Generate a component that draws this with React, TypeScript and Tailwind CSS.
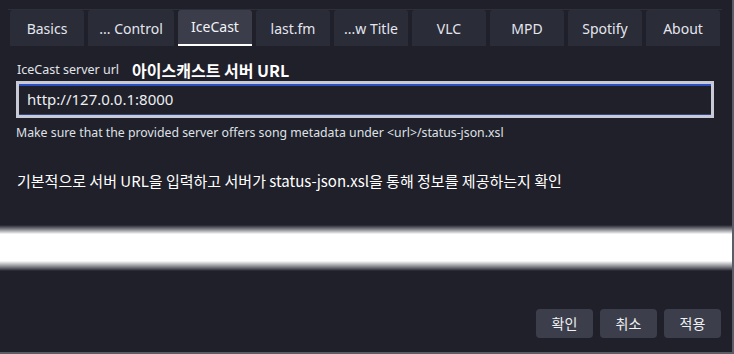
const tabs = [
  { label: "Basics", w: "w-[74px]" },
  { label: "... Control", w: "w-[86px]" },
  { label: "IceCast", w: "w-[74px]", active: true },
  { label: "last.fm", w: "w-[74px]" },
  { label: "...w Title", w: "w-[74px]" },
  { label: "VLC", w: "w-[74px]" },
  { label: "MPD", w: "w-[74px]" },
  { label: "Spotify", w: "w-[74px]" },
  { label: "About", w: "w-[74px]" },
]

const font = "font-['Noto_Sans','Noto_Sans_CJK_KR',sans-serif]"
const kr = "font-['Noto_Sans_CJK_KR','Noto_Sans',sans-serif]"

export default function App() {
  return (
    <div className={`w-[734px] h-[354px] bg-[#1f2029] text-[#e8e9ee] flex flex-col border-r-2 border-b-2 border-[#5b5d66] overflow-hidden ${font}`}>
      {/* tab strip */}
      <div className="mt-[9px] ml-[8px] w-[714px] border-t border-[#2d2f39] flex gap-1 pl-[2px]">
        {tabs.map((t) => (
          <div
            key={t.label}
            className={`${t.w} h-[36px] rounded-t-[3px] flex items-center justify-center text-[14px] relative ${
              t.active ? "bg-[#3b3e4a] text-[#f2f3f7]" : "bg-[#2a2c38] text-[#e4e6ee]"
            }`}
          >
            <span className={t.active ? "-mt-[4px]" : ""}>{t.label}</span>
            {t.active && <div className="absolute left-0 right-0 bottom-0 h-[2px] bg-white" />}
          </div>
        ))}
      </div>

      {/* form */}
      <div className="px-[16px] flex flex-col">
        <div className="mt-[14px] h-[20px] flex items-center gap-[13px] pl-[1px]">
          <span className="text-[12.5px] text-[#e2e4ea]">IceCast server url</span>
          <span className={`text-[16px] font-bold text-white ${kr}`}>아이스캐스트 서버 URL</span>
        </div>

        <div className="mt-[1px] w-[698px] h-[37px] border-[3px] border-[#c8cad5]">
          <div className="h-full border-t-2 border-[#2b50c2] border-b border-b-[#34468a] flex items-center pl-[8px]">
            <span className="text-[15px] text-[#eceef2] -mt-[1px]">http://127.0.0.1:8000</span>
          </div>
        </div>

        <div className="mt-[5px] text-[12.3px] text-[#dfe1e7] leading-[20px]">
          Make sure that the provided server offers song metadata under &lt;url&gt;/status-json.xsl
        </div>

        <div className={`mt-[27px] pl-[1px] text-[15px] font-normal text-white leading-[22px] ${kr}`}>
          기본적으로 서버 URL을 입력하고 서버가 status-json.xsl을 통해 정보를 제공하는지 확인
        </div>
      </div>

      {/* light band */}
      <div className="mt-[33px] -mr-[2px] h-[46px] bg-[linear-gradient(to_bottom,#1f2029_0%,#8a8b92_10%,#ffffff_20%,#ffffff_78%,#8a8b92_90%,#1f2029_100%)]" />

      {/* buttons */}
      <div className="mt-auto mb-[14px] flex justify-end gap-[7px] pr-[11px]">
        {["확인", "취소", "적용"].map((b) => (
          <div
            key={b}
            className={`w-[57px] h-[29px] rounded-[4px] bg-[#3c3f4b] flex items-center justify-center text-[14px] text-[#f0f1f4] ${kr}`}
          >
            {b}
          </div>
        ))}
      </div>
    </div>
  )
}
